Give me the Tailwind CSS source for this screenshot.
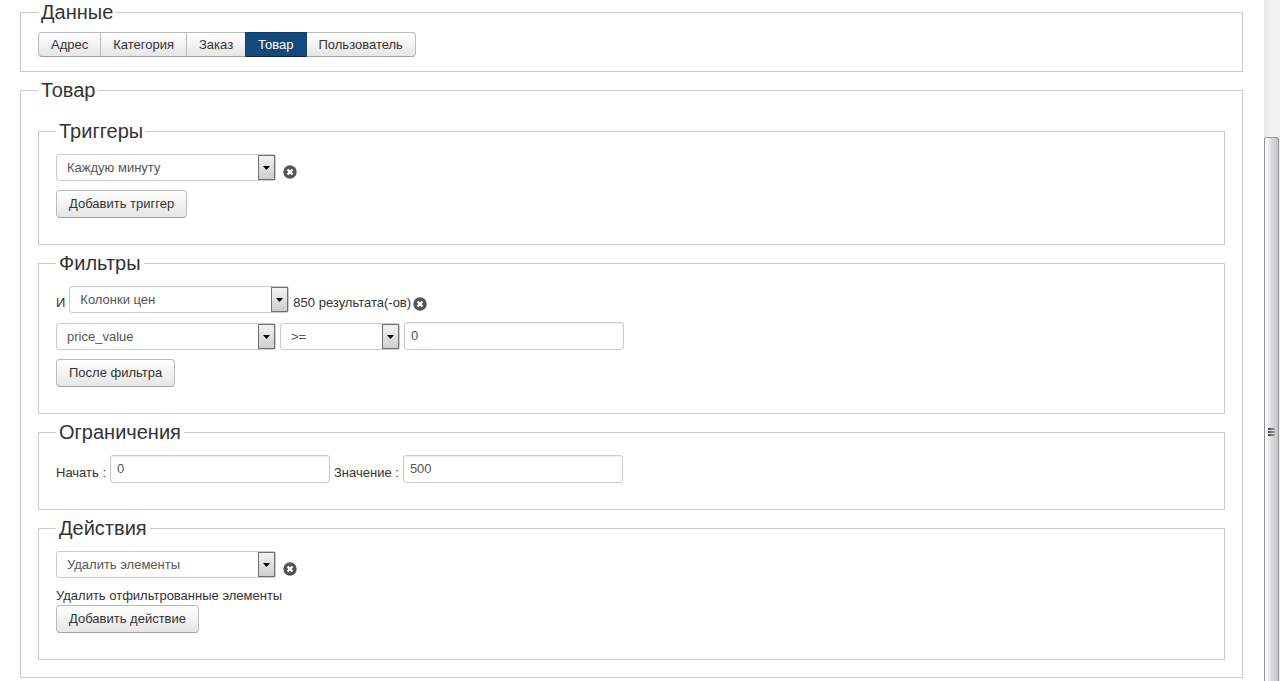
<!DOCTYPE html>
<html lang="ru">
<head>
    <meta charset="UTF-8">
    <meta name="viewport" content="width=device-width, initial-scale=1.0">
    <title>Товар</title>
    <script src="https://cdn.jsdelivr.net/npm/@tailwindcss/browser@4"></script>
</head>
<body class="bg-white font-['Liberation_Sans',Arial,sans-serif] text-[13px] leading-[18px] text-[#333]">
    <!-- Shared icons -->
    <svg class="hidden">
        <symbol id="remove" viewBox="0 0 14 14">
            <circle cx="7" cy="7" r="6.7" fill="#555"/>
            <path d="M4.5 4.5l5 5M9.5 4.5l-5 5" stroke="#fff" stroke-width="2.4"/>
        </symbol>
        <symbol id="caret" viewBox="0 0 7 4">
            <path d="M0 0h7L3.5 4z" fill="#000"/>
        </symbol>
    </svg>

    <div class="flex h-screen overflow-hidden">
        <main class="flex-1 min-w-0 pt-[3px] pl-5 pr-[21px]">
            <form class="flex flex-col gap-[9px]">
                <!-- Data type -->
                <fieldset class="border border-[#ccc] px-[17px] pt-[10px] pb-[14px]">
                    <legend class="px-[3px] text-[20px] leading-[19px]">Данные</legend>
                    <div class="flex">
                        <button type="button" class="h-[25px] px-3 border border-[#bbb] border-b-[#a2a2a2] rounded-l-[4px] bg-linear-to-b from-white to-[#e6e6e6]">Адрес</button>
                        <button type="button" class="h-[25px] px-3 -ml-px border border-[#bbb] border-b-[#a2a2a2] bg-linear-to-b from-white to-[#e6e6e6]">Категория</button>
                        <button type="button" class="h-[25px] px-3 -ml-px border border-[#bbb] border-b-[#a2a2a2] bg-linear-to-b from-white to-[#e6e6e6]">Заказ</button>
                        <button type="button" class="h-[25px] px-3 -ml-px border border-[#13406c] border-b-[#0b2a4c] bg-[#15497c] text-white">Товар</button>
                        <button type="button" class="h-[25px] px-3 border border-l-0 border-[#bbb] border-b-[#a2a2a2] rounded-r-[4px] bg-linear-to-b from-white to-[#e6e6e6]">Пользователь</button>
                    </div>
                </fieldset>

                <!-- Product -->
                <fieldset class="border border-[#ccc] px-[17px] pt-[22px] pb-[17px]">
                    <legend class="px-[3px] text-[20px] leading-[19px]">Товар</legend>
                    <div class="flex flex-col gap-[9px]">
                        <!-- Triggers -->
                        <fieldset class="border border-[#ccc] px-[17px] pt-[13px] pb-[26px]">
                            <legend class="px-[3px] text-[20px] leading-[19px]">Триггеры</legend>
                            <div class="flex items-end gap-[7px]">
                                <div class="relative w-[220px]">
                                    <select aria-label="Триггер" class="block w-full h-[27px] pl-[10px] pr-5 appearance-none border border-[#ccc] rounded-[3px] bg-white text-[#555]">
                                        <option>Каждую минуту</option>
                                    </select>
                                    <span class="absolute right-px inset-y-px w-[17px] flex items-center justify-center border border-[#707070] bg-linear-to-b from-[#f2f2f2] to-[#cfcfcf] pointer-events-none"><svg class="w-[7px] h-1"><use href="#caret"/></svg></span>
                                </div>
                                <button type="button" aria-label="Удалить" class="mb-[2px]"><svg class="block size-[14px]"><use href="#remove"/></svg></button>
                            </div>
                            <button type="button" class="block mt-[9px] h-7 px-3 border border-[#bbb] border-b-[#a2a2a2] rounded-[4px] bg-linear-to-b from-white to-[#e6e6e6]">Добавить триггер</button>
                        </fieldset>

                        <!-- Filters -->
                        <fieldset class="border border-[#ccc] px-[17px] pt-[13px] pb-[26px]">
                            <legend class="px-[3px] text-[20px] leading-[19px]">Фильтры</legend>
                            <div class="flex items-end gap-1">
                                <label for="filter" class="leading-[20px]">И</label>
                                <div class="relative w-[220px]">
                                    <select id="filter" class="block w-full h-[27px] pl-[10px] pr-5 appearance-none border border-[#ccc] rounded-[3px] bg-white text-[#555]">
                                        <option>Колонки цен</option>
                                    </select>
                                    <span class="absolute right-px inset-y-px w-[17px] flex items-center justify-center border border-[#707070] bg-linear-to-b from-[#f2f2f2] to-[#cfcfcf] pointer-events-none"><svg class="w-[7px] h-1"><use href="#caret"/></svg></span>
                                </div>
                                <div class="flex items-end gap-[2px]">
                                    <span class="leading-[20px]">850 результата(-ов)</span>
                                    <button type="button" aria-label="Удалить" class="mb-[2px]"><svg class="block size-[14px]"><use href="#remove"/></svg></button>
                                </div>
                            </div>
                            <div class="flex items-end gap-1 mt-[9px]">
                                <div class="relative w-[220px]">
                                    <select aria-label="Колонка" class="block w-full h-[27px] pl-[10px] pr-5 appearance-none border border-[#ccc] rounded-[3px] bg-white text-[#555]">
                                        <option>price_value</option>
                                    </select>
                                    <span class="absolute right-px inset-y-px w-[17px] flex items-center justify-center border border-[#707070] bg-linear-to-b from-[#f2f2f2] to-[#cfcfcf] pointer-events-none"><svg class="w-[7px] h-1"><use href="#caret"/></svg></span>
                                </div>
                                <div class="relative w-[120px]">
                                    <select aria-label="Условие" class="block w-full h-[27px] pl-[10px] pr-5 appearance-none border border-[#ccc] rounded-[3px] bg-white text-[#555]">
                                        <option>&gt;=</option>
                                    </select>
                                    <span class="absolute right-px inset-y-px w-[17px] flex items-center justify-center border border-[#707070] bg-linear-to-b from-[#f2f2f2] to-[#cfcfcf] pointer-events-none"><svg class="w-[7px] h-1"><use href="#caret"/></svg></span>
                                </div>
                                <input type="text" aria-label="Цена" value="0" class="w-[220px] h-7 px-[6px] pb-[2px] border border-[#ccc] rounded-[3px] bg-white text-[#555] inset-shadow-[0_1px_1px_rgba(0,0,0,0.075)]">
                            </div>
                            <button type="button" class="block mt-[9px] h-7 px-3 border border-[#bbb] border-b-[#a2a2a2] rounded-[4px] bg-linear-to-b from-white to-[#e6e6e6]">После фильтра</button>
                        </fieldset>

                        <!-- Limits -->
                        <fieldset class="border border-[#ccc] px-[17px] pt-[13px] pb-[26px]">
                            <legend class="px-[3px] text-[20px] leading-[19px]">Ограничения</legend>
                            <div class="flex items-end gap-1">
                                <label for="start" class="leading-[20px]">Начать :</label>
                                <input type="text" id="start" value="0" class="w-[220px] h-7 px-[6px] pb-[2px] border border-[#ccc] rounded-[3px] bg-white text-[#555] inset-shadow-[0_1px_1px_rgba(0,0,0,0.075)]">
                                <label for="count" class="leading-[20px]">Значение :</label>
                                <input type="text" id="count" value="500" class="w-[220px] h-7 px-[6px] pb-[2px] border border-[#ccc] rounded-[3px] bg-white text-[#555] inset-shadow-[0_1px_1px_rgba(0,0,0,0.075)]">
                            </div>
                        </fieldset>

                        <!-- Actions -->
                        <fieldset class="border border-[#ccc] px-[17px] pt-[13px] pb-[26px]">
                            <legend class="px-[3px] text-[20px] leading-[19px]">Действия</legend>
                            <div class="flex items-end gap-[7px]">
                                <div class="relative w-[220px]">
                                    <select aria-label="Действие" class="block w-full h-[27px] pl-[10px] pr-5 appearance-none border border-[#ccc] rounded-[3px] bg-white text-[#555]">
                                        <option>Удалить элементы</option>
                                    </select>
                                    <span class="absolute right-px inset-y-px w-[17px] flex items-center justify-center border border-[#707070] bg-linear-to-b from-[#f2f2f2] to-[#cfcfcf] pointer-events-none"><svg class="w-[7px] h-1"><use href="#caret"/></svg></span>
                                </div>
                                <button type="button" aria-label="Удалить" class="mb-[2px]"><svg class="block size-[14px]"><use href="#remove"/></svg></button>
                            </div>
                            <p class="mt-[9px]">Удалить отфильтрованные элементы</p>
                            <button type="button" class="block h-7 px-3 border border-[#bbb] border-b-[#a2a2a2] rounded-[4px] bg-linear-to-b from-white to-[#e6e6e6]">Добавить действие</button>
                        </fieldset>
                    </div>
                </fieldset>
            </form>
        </main>

        <!-- Scrollbar -->
        <div class="w-4 shrink-0 overflow-hidden bg-linear-to-r from-[#e8e8e8] to-[#f0f0f0] to-40%">
            <div class="mt-[137px] w-[15px] h-[590px] flex flex-col items-center justify-center gap-px border border-[#979797] rounded-[2px] bg-linear-to-r from-[#f5f5f5] from-20% via-[#dadade] via-50% to-[#c4c4ca]">
                <span class="w-[7px] h-[2px] bg-linear-to-r from-[#444] to-[#aaa]"></span>
                <span class="w-[7px] h-[2px] bg-linear-to-r from-[#444] to-[#aaa]"></span>
                <span class="w-[7px] h-[2px] bg-linear-to-r from-[#444] to-[#aaa]"></span>
            </div>
        </div>
    </div>
</body>
</html>
